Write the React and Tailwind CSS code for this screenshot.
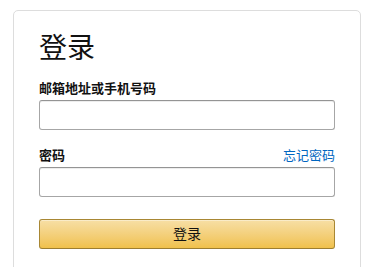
import React from 'react'

function App() {
    return (
        <div className="h-[267px] overflow-hidden bg-white pt-[10px] pl-[13px] pr-[7px]" style={{ fontFamily: '"Liberation Sans", Arial, "Noto Sans CJK SC", sans-serif' }}>
            <div className="border border-[#dddddd] rounded-[5px] px-[25px] pt-[21px] pb-6 h-[300px]">
                <h1 className="text-[28px] leading-[34px] font-normal text-[#111111] mb-[13px]">登录</h1>

                <label className="block text-[13px] leading-[19px] font-bold text-[#111111] mb-[2px]">邮箱地址或手机号码</label>
                <input className="block w-full h-[30px] border border-[#a6a6a6] border-t-[#949494] rounded-[3px] shadow-[0_1px_0_rgba(0,0,0,0.07)_inset] outline-none px-2" />

                <div className="flex items-center justify-between mt-[16px] mb-[2px]">
                    <label className="text-[13px] leading-[19px] font-bold text-[#111111]">密码</label>
                    <a className="text-[13px] leading-[19px] text-[#0066c0]">忘记密码</a>
                </div>
                <input type="password" className="block w-full h-[30px] border border-[#a6a6a6] border-t-[#949494] rounded-[3px] shadow-[0_1px_0_rgba(0,0,0,0.07)_inset] outline-none px-2" />

                <button className="block w-full h-[30px] mt-[22px] rounded-[3px] border border-[#a88734] border-b-[#9c7e31] bg-gradient-to-b from-[#f7dfa5] to-[#f0c14b] text-[14px] text-[#111111] shadow-[inset_0_1px_0_rgba(255,255,255,0.4)]">
                    登录
                </button>
            </div>
        </div>
    )
}

export default App
